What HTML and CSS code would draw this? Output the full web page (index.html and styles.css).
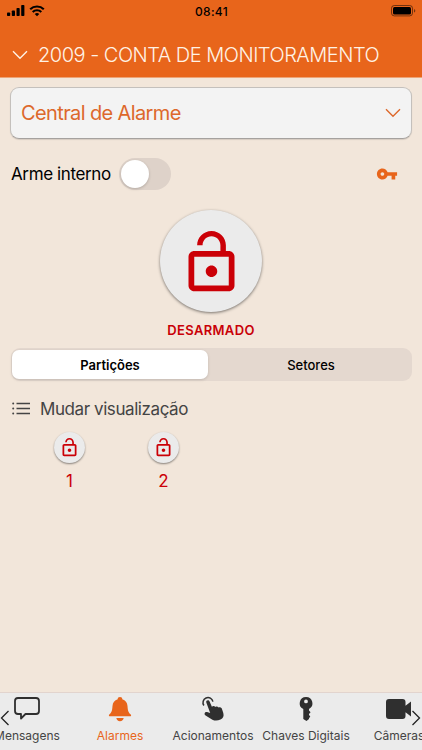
FILE: index.html
```
<!DOCTYPE html>
<html lang="pt-BR">
<head>
    <meta charset="UTF-8">
    <meta name="viewport" content="width=device-width, initial-scale=1.0">
    <title>Alarmes</title>
    <link rel="stylesheet" href="styles.css">
</head>
<body>
    <svg class="defs" width="0" height="0">
        <symbol id="lock-open" viewBox="0 0 24 24">
            <path d="M12 17c1.1 0 2-.9 2-2s-.9-2-2-2-2 .9-2 2 .9 2 2 2zm6-9h-1V6c0-2.76-2.24-5-5-5S7 3.24 7 6h1.9c0-1.71 1.39-3.1 3.1-3.1s3.1 1.39 3.1 3.1v2H6c-1.1 0-2 .9-2 2v10c0 1.1.9 2 2 2h12c1.1 0 2-.9 2-2V10c0-1.1-.9-2-2-2zm0 12H6V10h12v10z"/>
        </symbol>
    </svg>

    <header class="header">
        <div class="status-bar">
            <div class="signal">
                <svg width="18" height="12" viewBox="0 0 18 12">
                    <rect x="0" y="7.5" width="3.2" height="3.5" rx=".8"/>
                    <rect x="4.8" y="5.5" width="3.2" height="5.5" rx=".8"/>
                    <rect x="9.5" y="3" width="3.2" height="8" rx=".8"/>
                    <rect x="14.2" y="0" width="3.2" height="11" rx=".8"/>
                </svg>
                <svg width="16" height="12" viewBox="0 0 16 12" fill="none" stroke="#000" stroke-width="2.1">
                    <path d="M1.2 4.3a9.7 9.7 0 0 1 13.6 0M3.7 7a6.1 6.1 0 0 1 8.6 0"/>
                    <path d="M8 11.3L5.7 9a3.3 3.3 0 0 1 4.6 0z" fill="#000" stroke="none"/>
                </svg>
            </div>
            <span class="time">08:41</span>
            <svg class="battery" width="25" height="12" viewBox="0 0 25 12">
                <rect x=".5" y=".5" width="21" height="10.4" rx="2.8" fill="none" stroke="#000" stroke-opacity=".5"/>
                <rect x="2" y="2" width="18" height="7.4" rx="1.5"/>
                <path d="M23 4v3.6q1.3-.4 1.3-1.8T23 4z" opacity=".5"/>
            </svg>
        </div>
        <div class="account">
            <svg width="16" height="10" viewBox="0 0 16 10"><path class="chevron" d="M1 1.3l7 7 7-7"/></svg>
            <span class="account-name">2009 - CONTA DE MONITORAMENTO</span>
        </div>
    </header>

    <main class="content">
        <div class="select">
            <span class="select-label">Central de Alarme</span>
            <svg width="16" height="10" viewBox="0 0 16 10"><path class="chevron" d="M1 1.3l7 7 7-7"/></svg>
        </div>

        <div class="arm-row">
            <span class="arm-label">Arme interno</span>
            <div class="switch"><div class="knob"></div></div>
            <svg class="key" width="22" height="22" viewBox="0 0 24 24"><path d="M12.65 10C11.83 7.67 9.61 6 7 6c-3.31 0-6 2.69-6 6s2.69 6 6 6c2.61 0 4.83-1.67 5.65-4H17v4h4v-4h2v-4H12.65zM7 14c-1.1 0-2-.9-2-2s.9-2 2-2 2 .9 2 2-.9 2-2 2z"/></svg>
        </div>

        <div class="status">
            <div class="status-button"><svg width="69" height="69"><use href="#lock-open"/></svg></div>
            <span class="status-label">DESARMADO</span>
        </div>

        <div class="segments">
            <div class="segment active"><span>Partições</span></div>
            <div class="segment"><span>Setores</span></div>
        </div>

        <div class="view-toggle">
            <svg width="18" height="14" viewBox="0 0 18 14">
                <path d="M4.5 1.5H18M4.5 6.5H18M4.5 11.5H18" stroke="#444" stroke-width="1.3"/>
                <circle cx="1.2" cy="1.5" r="1"/><circle cx="1.2" cy="6.5" r="1"/><circle cx="1.2" cy="11.5" r="1"/>
            </svg>
            <span class="view-label">Mudar visualização</span>
        </div>

        <div class="partitions">
            <div class="partition">
                <div class="partition-button"><svg width="21" height="21"><use href="#lock-open"/></svg></div>
                <span>1</span>
            </div>
            <div class="partition">
                <div class="partition-button"><svg width="21" height="21"><use href="#lock-open"/></svg></div>
                <span>2</span>
            </div>
        </div>
    </main>

    <nav class="tab-bar">
        <div class="tabs">
            <div class="tab">
                <svg width="28" height="28" viewBox="0 0 28 28"><path d="M5 3h18q3 0 3 3v10q0 3-3 3H12.5L8 23.500V19H5q-3 0-3-3V6q0-3 3-3z" fill="none" stroke="#2f2f2f" stroke-width="1.8" stroke-linejoin="round"/></svg>
                <span>Mensagens</span>
            </div>
            <div class="tab selected">
                <svg width="28" height="28" viewBox="0 0 28 28"><path d="M14 2c-1.5 0-2.3.9-2.3 2.2C8.5 5 6.8 7.5 6.5 11c-.3 4.5-.8 6.5-3.2 8.4-.8.7-.4 1.9.7 1.9h20c1.100 0 1.500-1.200.7-1.900-2.400-1.900-2.900-3.900-3.200-8.400-.3-3.500-2-6-5.200-6.800C16.300 2.900 15.500 2 14 2zM10.300 23h7.400c-.3 2-1.700 3.200-3.700 3.200s-3.400-1.200-3.700-3.200z"/></svg>
                <span>Alarmes</span>
            </div>
            <div class="tab">
                <svg width="28" height="28" viewBox="0 0 28 28">
                    <path d="M4.9 10.500a5 5 0 1 1 9-3.800" fill="none" stroke="#2f2f2f" stroke-width="1.500"/>
                    <path d="M7.300 7.500c-.7-2.100 2.400-3.200 3.300-1l2.300 5.200c1.100-1 2.700-.7 3.400.2 1.100-.8 2.600-.4 3.300.5 1.300-.5 2.700 0 3.300 1.300l1.400 4.300c.9 3.100-.2 5.300-2.800 6.500-2.800 1.400-5.600 1.500-8.100.2L6.600 20.500c-2-1.500-.7-4 1.500-3.500l3.100 1z"/>
                </svg>
                <span>Acionamentos</span>
            </div>
            <div class="tab">
                <svg width="28" height="28" viewBox="0 0 28 28"><path fill-rule="evenodd" d="M14 2a6.300 6.300 0 0 1 3 11.900v1.600l1.600 1.700-1.600 1.700v1l1.300 1.600-1.300 1.700v.8L14.500 26 11.300 24V14A6.300 6.300 0 0 1 14 2zm0 2.500a1.900 1.900 0 1 0 0 3.800 1.900 1.900 0 0 0 0-3.800z"/></svg>
                <span>Chaves Digitais</span>
            </div>
            <div class="tab">
                <svg width="28" height="28" viewBox="0 0 28 28"><path d="M4 4h13.500q3 0 3 3v3.800l5.500-4.300v15l-5.500-4.300V21q0 3-3 3H4q-3 0-3-3V7q0-3 3-3z"/></svg>
                <span>Câmeras</span>
            </div>
        </div>
        <svg class="scroll-arrow prev" width="10" height="16" viewBox="0 0 10 16"><path d="M8.500 1L1.500 8l7 7"/></svg>
        <svg class="scroll-arrow next" width="10" height="16" viewBox="0 0 10 16"><path d="M1.500 1l7 7-7 7"/></svg>
    </nav>
</body>
</html>
```
FILE: styles.css
```
* {
    box-sizing: border-box;
}
body {
    margin: 0;
    width: 422px;
    height: 750px;
    overflow: hidden;
    display: flex;
    flex-direction: column;
    background-color: #f2e6da;
    font-family: Inter, "Liberation Sans", sans-serif;
    color: #000;
    white-space: nowrap;
}
svg {
    display: block;
    flex-shrink: 0;
}
.defs {
    position: absolute;
}
.header {
    height: 78px;
    background-color: #e8651b;
    border-bottom: 1px solid #eda477;
}
.status-bar {
    display: grid;
    grid-template-columns: 1fr auto 1fr;
    align-items: center;
    height: 22px;
    padding: 0 6px 0 7px;
}
.signal {
    display: flex;
    gap: 4px;
}
.time {
    font-size: 12px;
    font-weight: 500;
    letter-spacing: 0.3px;
}
.battery {
    justify-self: end;
}
.account {
    display: flex;
    align-items: center;
    gap: 10px;
    height: 66px;
    padding-left: 12px;
    color: #fff3e6;
}
.account-name {
    font-size: 20px;
    font-weight: 350;
    letter-spacing: -0.5px;
}
.chevron {
    fill: none;
    stroke: currentColor;
    stroke-width: 1.4;
}
.content {
    flex: 1;
    padding: 9px 10px 0;
}
.select {
    display: flex;
    align-items: center;
    justify-content: space-between;
    height: 52px;
    padding: 0 10px;
    border: 1px solid #c4c0bc;
    border-bottom-color: #a5a19e;
    border-radius: 9px;
    background-color: #f3f3f3;
    box-shadow: 0 1px 1px rgba(0, 0, 0, 0.12);
    color: #dd682b;
}
.select-label {
    font-size: 20px;
    letter-spacing: -0.62px;
}
.arm-row {
    display: flex;
    align-items: center;
    height: 32px;
    margin-top: 19px;
    padding: 0 14px 0 1px;
}
.arm-label {
    width: 108px;
    font-size: 17px;
    letter-spacing: -0.38px;
}
.switch {
    width: 52px;
    height: 32px;
    padding: 2px;
    border-radius: 16px;
    background-color: #ded2c9;
}
.knob {
    width: 28px;
    height: 28px;
    border-radius: 50%;
    background-color: #fff;
    box-shadow: 0 1px 3px rgba(0, 0, 0, 0.2);
}
.key {
    margin-left: auto;
    fill: #e8651b;
}
.status {
    display: flex;
    flex-direction: column;
    align-items: center;
    margin-top: 20px;
    color: #c90007;
}
.status-button {
    display: flex;
    justify-content: center;
    width: 102px;
    height: 102px;
    padding-top: 18px;
    border-radius: 50%;
    background-color: #ebebeb;
    box-shadow: 0 1px 3px rgba(0, 0, 0, 0.5);
    fill: #cb0007;
}
.status-label {
    margin-top: 9px;
    font-size: 13px;
    line-height: 18px;
    font-weight: 600;
    letter-spacing: 0.35px;
}
.segments {
    display: grid;
    grid-template-columns: 196px 200px;
    justify-content: space-between;
    height: 33px;
    margin: 9px 0 0 1px;
    padding: 2px 1px;
    border-radius: 9px;
    background-color: #e4d8cf;
    font-size: 13px;
    font-weight: 500;
}
.segment {
    display: flex;
    align-items: center;
    justify-content: center;
}
.segment.active {
    border-radius: 7px;
    background-color: #fff;
    box-shadow: 0 1px 3px rgba(0, 0, 0, 0.15);
    font-weight: 600;
}
.view-toggle {
    display: flex;
    align-items: center;
    gap: 10px;
    height: 22px;
    margin-top: 17px;
    padding-left: 2px;
    color: #444;
    fill: #444;
}
.view-label {
    font-size: 17px;
    letter-spacing: -0.42px;
}
.partitions {
    display: flex;
    margin: 12px 0 0 12.5px;
}
.partition {
    display: flex;
    flex-direction: column;
    align-items: center;
    width: 94px;
    gap: 8px;
    color: #cb0007;
    font-size: 17px;
    line-height: 20px;
}
.partition-button {
    display: flex;
    align-items: center;
    justify-content: center;
    width: 31px;
    height: 31px;
    border-radius: 50%;
    background-color: #ebebeb;
    box-shadow: 0 1px 2px rgba(0, 0, 0, 0.45);
    fill: #cb0007;
}
.tab-bar {
    position: relative;
    height: 58px;
    border-top: 1px solid #e2d4ce;
    background-color: #ebebeb;
    overflow: hidden;
}
.tabs {
    display: flex;
    margin-left: -19.5px;
    padding-top: 2px;
}
.tab {
    display: flex;
    flex: 0 0 93px;
    flex-direction: column;
    align-items: center;
    gap: 5px;
    color: #444;
    fill: #2f2f2f;
    font-size: 12px;
    line-height: 16px;
}
.tab.selected {
    color: #e8651b;
    fill: #e8651b;
}
.scroll-arrow {
    position: absolute;
    top: 17px;
    fill: none;
    stroke: #222;
    stroke-width: 1.3;
}
.prev {
    left: 0;
}
.next {
    right: 1px;
}
```
